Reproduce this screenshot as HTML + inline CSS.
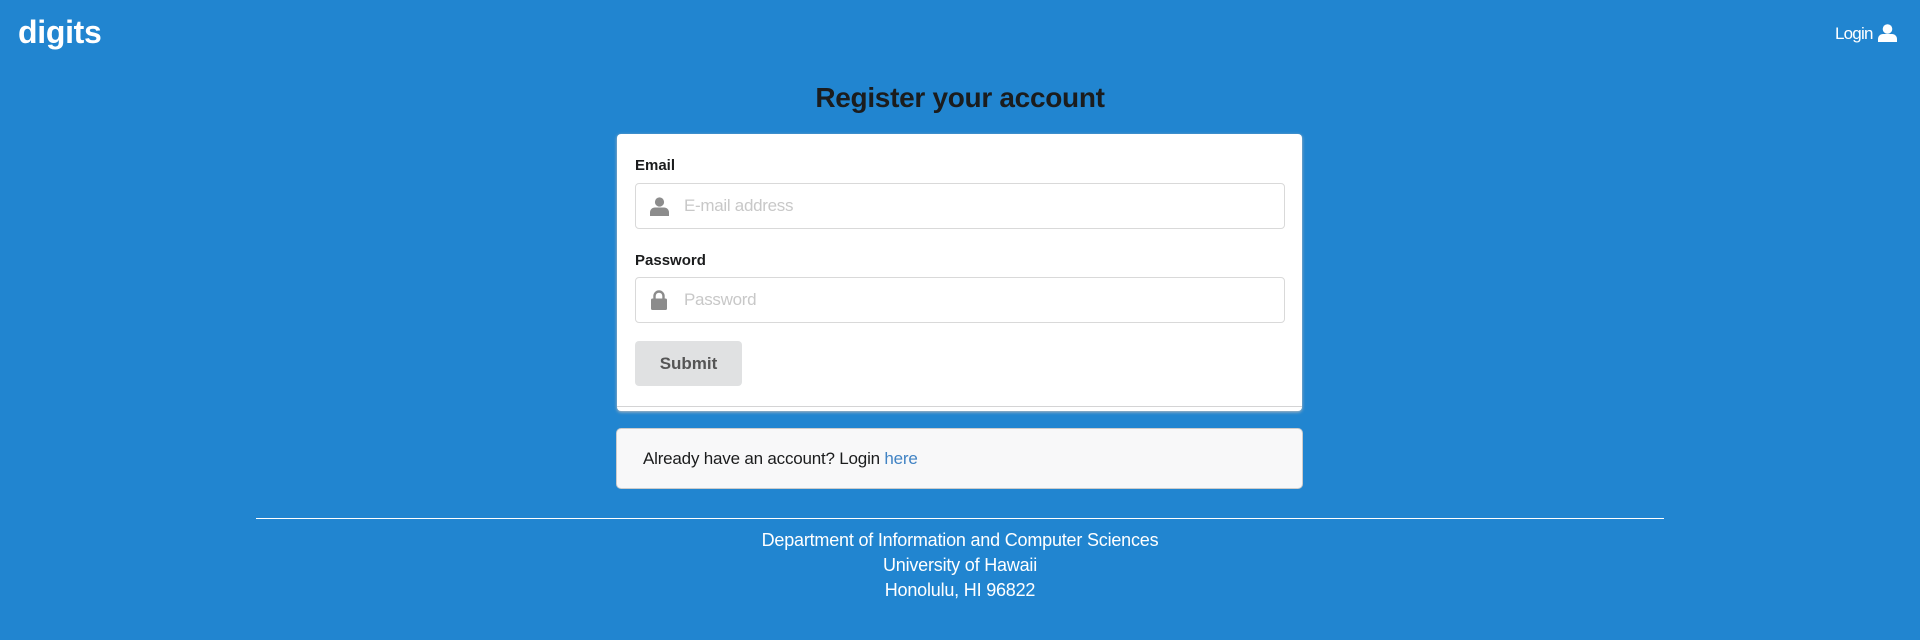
<!DOCTYPE html>
<html><head><meta charset="utf-8"><style>
*{box-sizing:border-box;margin:0;padding:0}
body{width:1920px;height:640px;background:#2185d0;font-family:"Liberation Sans",sans-serif;position:relative;overflow:hidden;color:#fff}
.a{position:absolute}
.logo{left:18px;top:14px;font-size:32px;font-weight:bold;letter-spacing:-0.3px}
.login{left:1835px;top:24px;font-size:17px;letter-spacing:-0.8px}
h1{position:absolute;left:0;width:1920px;text-align:center;top:82px;font-size:28px;color:#1b1c1d;letter-spacing:-0.3px}
.card{left:617px;top:134px;width:685px;height:277px;background:#fff;border-radius:4px;box-shadow:0 1px 3px #bbb}
.line{left:617px;top:406px;width:685px;height:1px;background:#d4d4d5}
.lbl{color:#1b1c1d;font-size:15px;font-weight:bold;left:635px}
.inp{left:635px;width:650px;height:46px;border:1px solid #d9d9d9;border-radius:4px;background:#fff}
.ph{left:684px;color:#c8c8c8;font-size:17px;letter-spacing:-0.3px}
.btn{left:635px;top:341px;width:107px;height:45px;background:#e0e1e2;border-radius:4px;color:#555;font-weight:bold;font-size:17px;text-align:center;line-height:45px}
.msg{left:617px;top:429px;width:685px;height:59px;background:#f8f8f9;border-radius:4px;box-shadow:0 0 0 1px #ccc;color:#1b1c1d;font-size:17px;padding-left:26px;line-height:59px;letter-spacing:-0.2px}
.msg span{color:#4183c4}
hr{position:absolute;left:256px;top:518px;width:1408px;border:0;border-top:1px solid #fff}
.ft{left:0;width:1920px;text-align:center;font-size:18px;line-height:25px;top:528px;letter-spacing:-0.2px}
</style></head><body>
<div class="a logo">digits</div>
<div class="a login">Login</div>
<svg class="a" style="left:1878px;top:24px" width="19" height="18" viewBox="0 0 19 18"><circle cx="9.5" cy="5" r="4.8" fill="#fff"/><path d="M0 18V15c0-3 2.5-5 5-5h9c2.5 0 5 2 5 5v3z" fill="#fff"/></svg>
<h1>Register your account</h1>
<div class="a card"></div>
<div class="a line"></div>
<div class="a lbl" style="top:157px">Email</div>
<div class="a inp" style="top:183px"></div>
<svg class="a" style="left:650px;top:197px" width="19" height="19" viewBox="0 0 19 19"><circle cx="9.5" cy="5" r="4.6" fill="#8c8c8c"/><path d="M0 19V15.5c0-3 2.3-5 5-5h9c2.7 0 5 2 5 5V19z" fill="#8c8c8c"/></svg>
<div class="a ph" style="top:196px">E-mail address</div>
<div class="a lbl" style="top:252px">Password</div>
<div class="a inp" style="top:277px"></div>
<svg class="a" style="left:651px;top:290px" width="16" height="20" viewBox="0 0 16 20"><path d="M3.5 9V6a4.5 4.5 0 0 1 9 0v3" stroke="#8c8c8c" stroke-width="2.4" fill="none"/><rect x="0" y="8.5" width="16" height="11.5" rx="1.5" fill="#8c8c8c"/></svg>
<div class="a ph" style="top:290px">Password</div>
<div class="a btn">Submit</div>
<div class="a msg">Already have an account? Login <span>here</span></div>
<hr>
<div class="a ft">Department of Information and Computer Sciences<br>University of Hawaii<br>Honolulu, HI 96822</div>
</body></html>
